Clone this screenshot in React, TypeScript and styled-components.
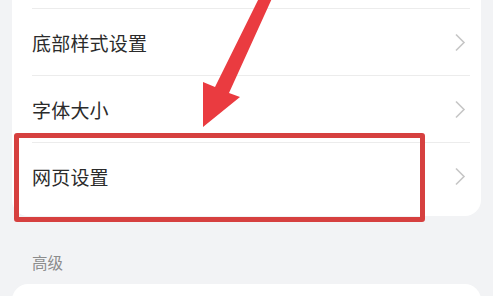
import React from 'react';
import styled, { createGlobalStyle } from 'styled-components';

const GlobalStyle = createGlobalStyle`
  html, body {
    margin: 0;
    padding: 0;
    background: #f2f3f5;
  }
  body {
    font-family: 'Noto Sans CJK SC', 'Noto Sans', sans-serif;
  }
`;

const Page = styled.div`
  position: relative;
  width: 493px;
  height: 296px;
  overflow: hidden;
  padding: 0 12px;
  box-sizing: border-box;
  background: #f2f3f5;
`;

const Card = styled.section<{ $top?: boolean }>`
  background: #ffffff;
  border-radius: ${(p) => (p.$top ? '0 0 16px 16px' : '16px')};
  padding: ${(p) => (p.$top ? '8px 11px 0 20px' : '0 11px 0 20px')};
`;

const Row = styled.div<{ $last?: boolean }>`
  display: flex;
  align-items: center;
  justify-content: space-between;
  height: 66px;
  padding-bottom: ${(p) => (p.$last ? '7px' : '0')};
  border-top: 1px solid #ececec;
  padding-right: 4px;
`;

const Label = styled.span`
  font-size: 19px;
  color: #2b2b2b;
  letter-spacing: 0.2px;
`;

const SectionTitle = styled.div`
  padding: 35px 0 0 20px;
  font-size: 15.5px;
  line-height: 22px;
  color: #8c8c8c;
`;

const LowerCard = styled(Card)`
  margin-top: 11px;
  height: 60px;
`;

const Highlight = styled.div`
  position: absolute;
  left: 14px;
  top: 133px;
  width: 411px;
  height: 89px;
  box-sizing: border-box;
  border: 5px solid #d6403f;
  border-radius: 3px;
  pointer-events: none;
`;

const ArrowLayer = styled.svg`
  position: absolute;
  left: 0;
  top: 0;
  width: 493px;
  height: 140px;
  pointer-events: none;
`;

const Chevron = () => (
  <svg width="12" height="19" viewBox="0 0 12 19">
    <polyline
      points="2,1.5 10,9.5 2,17.5"
      fill="none"
      stroke="#c6c6c6"
      strokeWidth="1.6"
    />
  </svg>
);

const rows = ['底部样式设置', '字体大小', '网页设置'];

export default function App() {
  return (
    <>
      <GlobalStyle />
      <Page>
        <Card $top>
          {rows.map((label, i) => (
            <Row key={label} $last={i === rows.length - 1}>
              <Label>{label}</Label>
              <Chevron />
            </Row>
          ))}
        </Card>
        <SectionTitle>高级</SectionTitle>
        <LowerCard />

        <Highlight />
        <ArrowLayer viewBox="0 0 493 140">
          <polygon
            points="261,-6 274,-6 229,93 240,97 203,127 203,82 215,87"
            fill="#ea3b40"
          />
        </ArrowLayer>
      </Page>
    </>
  );
}
